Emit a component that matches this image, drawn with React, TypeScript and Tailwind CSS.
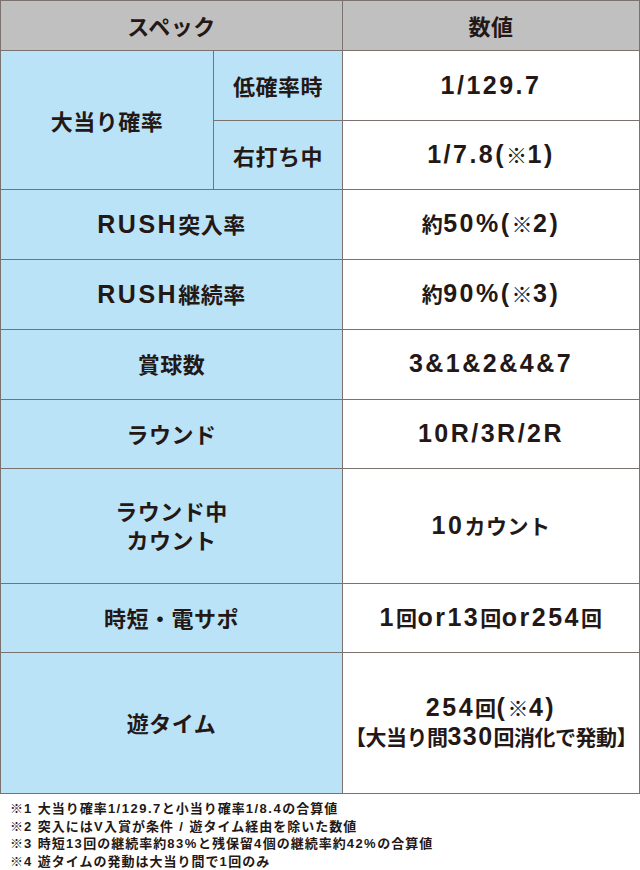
const cjkFont = { fontFamily: '"Noto Sans CJK JP", "Noto Sans", sans-serif' };
const latinFont = { fontFamily: '"Liberation Sans", Arial, sans-serif' };

// splits a text into ascii and japanese runs, the latin glyphs are set larger like the original artwork
function Mixed({ text, latin, cjk }: { text: string; latin: string; cjk: string }) {
  const parts = text.match(/[\x20-\x7E]+|[^\x20-\x7E]+/g) ?? [];
  return (
    <span className="whitespace-nowrap">
      {parts.map((p, i) =>
        /^[\x20-\x7E]+$/.test(p) ? (
          <span key={i} className={latin} style={latinFont}>
            {p}
          </span>
        ) : (
          <span key={i} className={cjk} style={cjkFont}>
            {p}
          </span>
        ),
      )}
    </span>
  );
}

const L = 'text-[25px] tracking-[2.5px]';
const C = 'text-[22px] tracking-[0.5px]';
const V = 'text-[21px] tracking-[0.5px]';

const rows: { label: string[]; value: string[]; h: string }[] = [
  { label: ['RUSH突入率'], value: ['約50%(※2)'], h: 'h-[70px]' },
  { label: ['RUSH継続率'], value: ['約90%(※3)'], h: 'h-[70px]' },
  { label: ['賞球数'], value: ['3&1&2&4&7'], h: 'h-[70px]' },
  { label: ['ラウンド'], value: ['10R/3R/2R'], h: 'h-[69px]' },
  { label: ['ラウンド中', 'カウント'], value: ['10カウント'], h: 'h-[115px]' },
  { label: ['時短・電サポ'], value: ['1回or13回or254回'], h: 'h-[69px]' },
  { label: ['遊タイム'], value: ['254回(※4)', '【大当り間330回消化で発動】'], h: 'h-[141px]' },
];

const notes = [
  '※1 大当り確率1/129.7と小当り確率1/8.4の合算値',
  '※2 突入にはV入賞が条件 / 遊タイム経由を除いた数値',
  '※3 時短13回の継続率約83%と残保留4個の継続率約42%の合算値',
  '※4 遊タイムの発動は大当り間で1回のみ',
];

const line = 'border-[#7a726e]';
const blue = 'bg-[#bbe3f8]';

export default function App() {
  return (
    <div className="w-[640px] h-[870px] bg-white text-[#231815] font-bold" style={cjkFont}>
      <div className={`grid grid-cols-[213px_129px_297px] border-l border-t ${line}`}>
        {/* header */}
        <div className={`col-span-2 h-[50px] flex items-center justify-center bg-[#c0c0c0] border-r border-b ${line}`}>
          <Mixed text="スペック" latin={L} cjk={C} />
        </div>
        <div className={`h-[50px] flex items-center justify-center bg-[#c0c0c0] border-r border-b ${line}`}>
          <Mixed text="数値" latin={L} cjk={C} />
        </div>

        {/* 大当り確率 */}
        <div className={`row-span-2 flex items-center justify-center ${blue} border-r border-b ${line}`}>
          <Mixed text="大当り確率" latin={L} cjk={C} />
        </div>
        <div className={`h-[70px] flex items-center justify-center ${blue} border-r border-b ${line}`}>
          <Mixed text="低確率時" latin={L} cjk={C} />
        </div>
        <div className={`h-[70px] flex items-center justify-center bg-white border-r border-b ${line}`}>
          <Mixed text="1/129.7" latin={L} cjk={V} />
        </div>
        <div className={`h-[69px] flex items-center justify-center ${blue} border-r border-b ${line}`}>
          <Mixed text="右打ち中" latin={L} cjk={C} />
        </div>
        <div className={`h-[69px] flex items-center justify-center bg-white border-r border-b ${line}`}>
          <Mixed text="1/7.8(※1)" latin={L} cjk={V} />
        </div>

        {rows.map((r) => (
          <div key={r.label.join('')} className="contents">
            <div className={`col-span-2 ${r.h} flex flex-col items-center justify-center ${blue} border-r border-b ${line} leading-[26px]`}>
              {r.label.map((t) => (
                <Mixed key={t} text={t} latin={L} cjk={C} />
              ))}
            </div>
            <div className={`${r.h} flex flex-col items-center justify-center bg-white border-r border-b ${line} leading-[27px]`}>
              {r.value.map((t, i) =>
                i === 0 ? (
                  <Mixed key={t} text={t} latin={L} cjk={V} />
                ) : (
                  <Mixed key={t} text={t} latin="text-[25px] tracking-[1.5px]" cjk="text-[21px] tracking-[-0.5px]" />
                ),
              )}
            </div>
          </div>
        ))}
      </div>

      {/* footnotes */}
      <div className="pt-[5px] pl-[10px] flex flex-col leading-[15.5px]">
        {notes.map((n) => (
          <Mixed key={n} text={n} latin="text-[13px] tracking-[1.5px]" cjk="text-[13px] tracking-[1px]" />
        ))}
      </div>
    </div>
  );
}
